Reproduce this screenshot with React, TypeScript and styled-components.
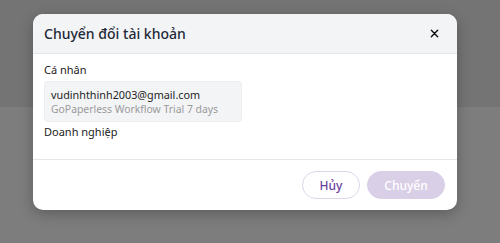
import React from "react";
import styled, { createGlobalStyle } from "styled-components";

const GlobalStyle = createGlobalStyle`
  html, body {
    margin: 0;
    padding: 0;
    width: 500px;
    height: 243px;
    overflow: hidden;
    font-family: "Noto Sans", "Liberation Sans", sans-serif;
  }
`;

const App = (): JSX.Element => {
  return (
    <>
      <GlobalStyle />
      <Backdrop>
        <PageTop />
        <PageRest />
      </Backdrop>
      <Dialog>
        <Header>
          <Title>Chuyển đổi tài khoản</Title>
          <CloseButton aria-label="close">
            <svg width="9" height="9" viewBox="0 0 10 10">
              <path
                d="M1.5 1.5 L8.5 8.5 M8.5 1.5 L1.5 8.5"
                stroke="#111"
                strokeWidth="1.6"
                strokeLinecap="round"
              />
            </svg>
          </CloseButton>
        </Header>
        <Body>
          <SectionLabel>Cá nhân</SectionLabel>
          <AccountCard>
            <AccountEmail>vudinhthinh2003@gmail.com</AccountEmail>
            <AccountPlan>GoPaperless Workflow Trial 7 days</AccountPlan>
          </AccountCard>
          <SectionLabel>Doanh nghiệp</SectionLabel>
        </Body>
        <Footer>
          <Button $variant="outline">Hủy</Button>
          <Button $variant="disabled">Chuyển</Button>
        </Footer>
      </Dialog>
    </>
  );
};

export default App;

const Backdrop = styled.div`
  display: flex;
  flex-direction: column;
  width: 500px;
  height: 243px;
`;

const PageTop = styled.div`
  height: 107px;
  background: #747474;
`;

const PageRest = styled.div`
  flex: 1;
  background: #7d7d7d;
`;

const Dialog = styled.div`
  position: absolute;
  left: 33px;
  top: 14px;
  width: 424px;
  height: 196px;
  background: #fff;
  border-radius: 10px;
  overflow: hidden;
  box-shadow: 0 4px 14px rgba(0, 0, 0, 0.25);
  display: flex;
  flex-direction: column;
`;

const Header = styled.div`
  height: 39px;
  flex: none;
  display: flex;
  align-items: center;
  justify-content: space-between;
  padding: 0 18px 0 11px;
  background: #f3f4f6;
  border-bottom: 1px solid #e5e7eb;
`;

const Title = styled.h2`
  margin: 0;
  font-size: 14px;
  font-weight: 500;
  color: #1f2937;
`;

const CloseButton = styled.button`
  border: none;
  background: none;
  padding: 0;
  display: flex;
  align-items: center;
  cursor: pointer;
`;

const Body = styled.div`
  flex: none;
  height: 106px;
  box-sizing: border-box;
  padding: 8px 11px 0;
  display: flex;
  flex-direction: column;
  align-items: flex-start;
  border-bottom: 1px solid #e5e7eb;
`;

const SectionLabel = styled.div`
  font-size: 11px;
  line-height: 16px;
  color: #222;
`;

const AccountCard = styled.div`
  box-sizing: border-box;
  width: 198px;
  height: 41px;
  margin: 3px 0 2px;
  padding: 4px 6px;
  background: #f3f4f6;
  border: 1px solid #eceef1;
  border-radius: 3px;
  display: flex;
  flex-direction: column;
  justify-content: center;
`;

const AccountEmail = styled.div`
  font-size: 10.8px;
  line-height: 15px;
  color: #1f1f1f;
`;

const AccountPlan = styled.div`
  font-size: 10.4px;
  line-height: 15px;
  color: #9a9a9a;
`;

const Footer = styled.div`
  flex: 1;
  display: flex;
  justify-content: flex-end;
  align-items: center;
  gap: 7px;
  padding: 0 12px 0 0;
`;

const Button = styled.button<{ $variant: "outline" | "disabled" }>`
  height: 28px;
  border-radius: 14px;
  font-family: inherit;
  font-size: 12px;
  font-weight: 500;
  padding: 0;
  width: ${(p) => (p.$variant === "outline" ? "58px" : "78px")};
  background: ${(p) => (p.$variant === "outline" ? "#fff" : "#d9cfe6")};
  color: ${(p) => (p.$variant === "outline" ? "#6b3fa0" : "#fff")};
  border: 1px solid
    ${(p) => (p.$variant === "outline" ? "#ddd5ea" : "#d9cfe6")};
`;
